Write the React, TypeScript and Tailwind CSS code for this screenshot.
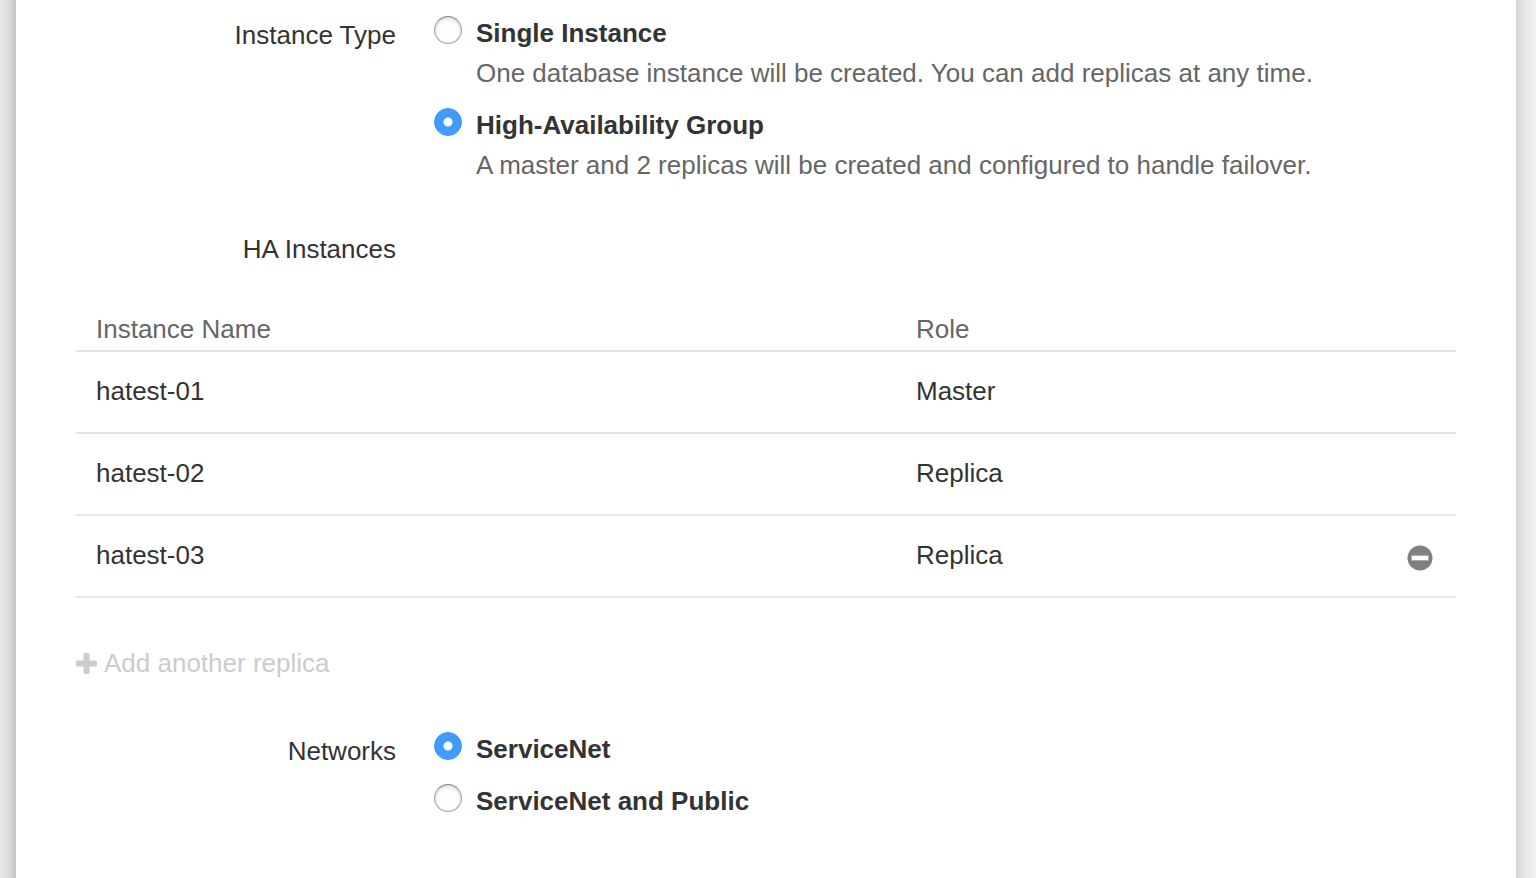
import React from "react";

type Option = { id: string; title: string; description?: string };

const instanceTypes: Option[] = [
  { id: "single", title: "Single Instance", description: "One database instance will be created. You can add replicas at any time." },
  { id: "ha", title: "High-Availability Group", description: "A master and 2 replicas will be created and configured to handle failover." },
];

const networks: Option[] = [
  { id: "servicenet", title: "ServiceNet" },
  { id: "public", title: "ServiceNet and Public" },
];

const instances = [
  { name: "hatest-01", role: "Master", removable: false },
  { name: "hatest-02", role: "Replica", removable: false },
  { name: "hatest-03", role: "Replica", removable: true },
];

function RadioOption({ group, option, selected }: { group: string; option: Option; selected: boolean }) {
  return (
    <div className="flex items-start gap-3.5">
      <input
        type="radio"
        id={option.id}
        name={group}
        defaultChecked={selected}
        className="mt-[3px] size-7 shrink-0 appearance-none rounded-full border border-[#a8a8a8] border-t-[#8c8c8c] bg-white shadow-[inset_0_2px_4px_#00000026,inset_0_0_1px_#00000059] checked:border-[#419bf9] checked:bg-[#419bf9] checked:bg-[radial-gradient(circle,#fff_0_4px,#419bf9_5px)] checked:shadow-none"
      />
      <label htmlFor={option.id} className="block">
        <span className="block font-bold">{option.title}</span>
        {option.description && <span className="block text-[#666]">{option.description}</span>}
      </label>
    </div>
  );
}

function RadioRow({ id, label, options, value }: { id: string; label: string; options: Option[]; value: string }) {
  return (
    <div role="radiogroup" aria-labelledby={id} className="flex gap-[38px]">
      <div id={id} className="w-80 shrink-0 pt-0.5 text-right">{label}</div>
      <div className="flex flex-col gap-3">
        {options.map((o) => <RadioOption key={o.id} group={id} option={o} selected={o.id === value} />)}
      </div>
    </div>
  );
}

export default function App() {
  return (
    <div className="flex min-h-screen font-['Liberation_Sans',Arial,sans-serif] text-[26px] leading-10 text-[#333]">
      <div className="w-4 shrink-0 bg-linear-to-r from-[#e8e8e8] via-[#dedede] to-[#c6c6c6]" />
      <main className="min-w-0 grow bg-white px-15 pt-[13px] pb-10">
        <RadioRow id="instance-type" label="Instance Type" options={instanceTypes} value="ha" />
        <h2 className="mt-11 w-80 text-right">HA Instances</h2>
        <table className="mt-10 w-full table-fixed text-left">
          <thead>
            <tr className="border-b-2 border-[#e5e5e5] text-[#666]">
              <th className="w-[820px] px-5 pb-px font-normal">Instance Name</th>
              <th className="px-5 pb-px font-normal">Role</th>
              <td className="w-20" />
            </tr>
          </thead>
          <tbody>
            {instances.map((i) => (
              <tr key={i.name} className="h-[82px] border-b-2 border-[#e5e5e5]">
                <td className="px-5 pb-0.5">{i.name}</td>
                <td className="px-5 pb-0.5">{i.role}</td>
                <td className="pt-1 pr-[23px]">
                  {i.removable && (
                    <button type="button" aria-label="Remove replica" className="ml-auto block">
                      <svg className="block" width="26" height="26" viewBox="0 0 26 26">
                        <circle cx="13" cy="13" r="12.5" fill="#808080" />
                        <rect x="4.5" y="10.5" width="17" height="5" fill="#fff" stroke="#999" strokeWidth="0.6" />
                      </svg>
                    </button>
                  )}
                </td>
              </tr>
            ))}
          </tbody>
        </table>
        <button type="button" className="mt-[45px] flex items-center gap-[7px] text-[#ccc]">
          <svg width="21" height="21" viewBox="0 0 21 21" fill="currentColor">
            <path d="M9 0h3a1.5 1.5 0 0 1 1.5 1.5v6h6A1.5 1.5 0 0 1 21 9v3a1.5 1.5 0 0 1-1.5 1.5h-6v6A1.5 1.5 0 0 1 12 21H9a1.5 1.5 0 0 1-1.5-1.5v-6h-6A1.5 1.5 0 0 1 0 12V9a1.5 1.5 0 0 1 1.5-1.5h6v-6A1.5 1.5 0 0 1 9 0z" />
          </svg>
          Add another replica
        </button>
        <div className="mt-[46px]">
          <RadioRow id="networks" label="Networks" options={networks} value="servicenet" />
        </div>
      </main>
      <div className="w-5 shrink-0 bg-linear-to-r from-[#d6d6d6] via-[#e8e8e8] to-[#f2f2f2]" />
    </div>
  );
}
